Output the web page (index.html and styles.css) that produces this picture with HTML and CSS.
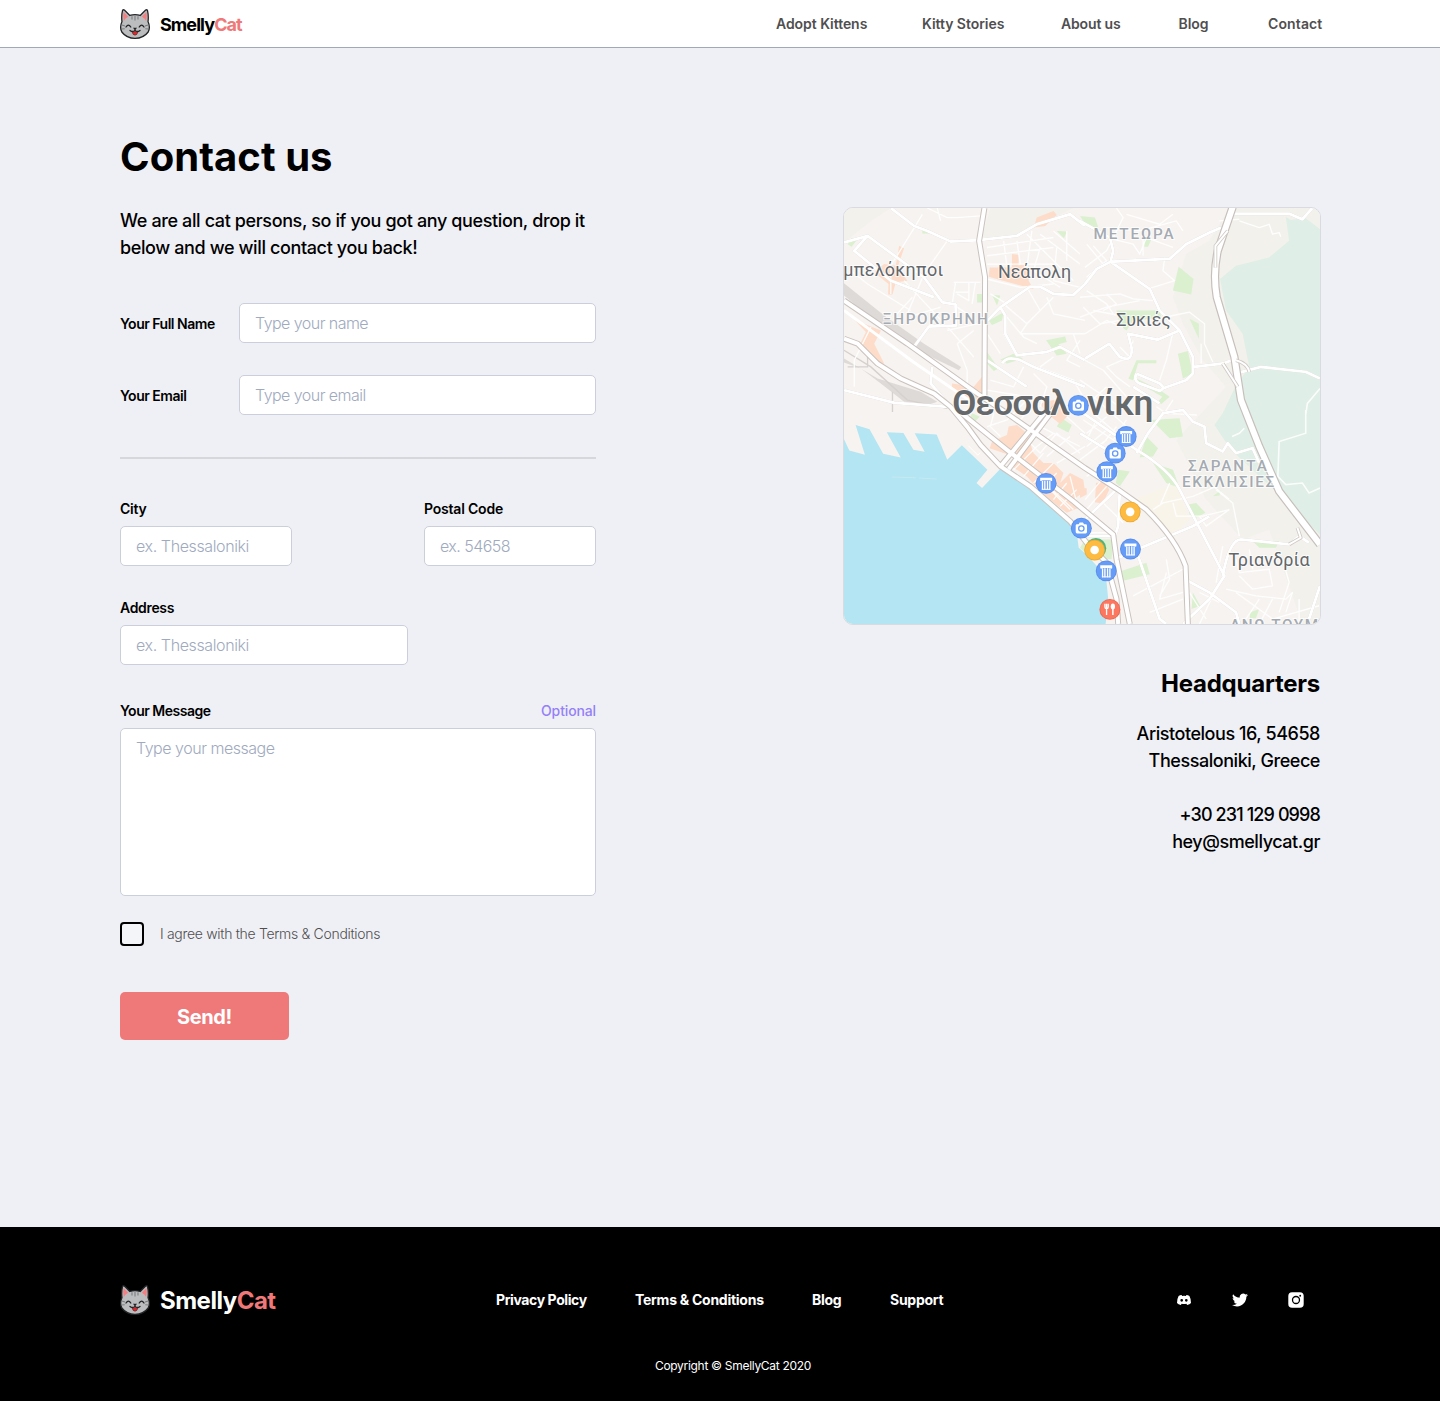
FILE: index.html
```
<!DOCTYPE html>
<html lang="en">
<head>
<meta charset="utf-8">
<title>SmellyCat – Contact us</title>
<link rel="stylesheet" href="styles.css">
</head>
<body>
<svg class="defs" aria-hidden="true">
  <symbol id="cat" viewBox="0 0 30 30">
    <path d="M2.600 1.200Q3.500 .3 4.600 1.300L9.800 6.400Q15 4.900 20.200 6.400L25.400 1.300Q26.500 .3 27.400 1.200Q28.800 7 28 12.600Q30.600 18.500 28.200 23Q23.500 29.300 15 29.300Q6.500 29.300 1.800 23Q-.6 18.500 2 12.600Q1.200 7 2.600 1.200Z" fill="#bcbdbe" stroke="#222426" stroke-width="1.300"/>
    <path d="M3.600 3L8.200 7.800Q5.200 9 3.800 12Q2.600 7 3.600 3ZM26.400 3L21.800 7.800Q24.800 9 26.200 12Q27.400 7 26.400 3Z" fill="#f37f82"/>
    <path d="M12 7.200v3.300M15 6.800v4.800M18 7.200v3.300M1.800 16l3.200 1M1.500 20l3.200-.2M28.200 16l-3.200 1M28.500 20l-3.200-.2" stroke="#7c7e80" stroke-width="1.100" fill="none"/>
    <path d="M6 18Q8.400 14.300 10.800 18M19.200 18Q21.600 14.300 24 18M10 21.400Q12.800 23.600 15 21.400Q17.200 23.600 20 21.400" stroke="#222426" stroke-width="1.300" fill="none" stroke-linecap="round"/>
    <path d="M12.200 23Q15 22.200 17.800 23Q17.200 26.200 15 26.200Q12.800 26.200 12.200 23Z" fill="#e8272c" stroke="#222426" stroke-width=".5"/>
    <path d="M13 18.800h4L15 21.400Z" fill="#222426"/>
  </symbol>
</svg>

<header class="header">
  <div class="container header-inner">
    <a class="brand"><svg class="brand-cat"><use href="#cat"/></svg><span class="brand-name">Smelly<b>Cat</b></span></a>
    <nav class="nav">
      <a>Adopt Kittens</a><a>Kitty Stories</a><a class="nav-about">About us</a><a>Blog</a><a class="nav-contact">Contact</a>
    </nav>
  </div>
</header>

<main class="container main">
  <section class="contact">
    <h1>Contact us</h1>
    <p class="lead">We are all cat persons, so if you got any question, drop it<br>below and we will contact you back!</p>
    <form>
      <div class="row"><label class="tight">Your Full Name</label><input class="field" placeholder="Type your name"></div>
      <div class="row"><label class="tight">Your Email</label><input class="field" placeholder="Type your email"></div>
      <hr>
      <div class="split">
        <div class="group"><label>City</label><input class="field place" placeholder="ex. Thessaloniki"></div>
        <div class="group"><label>Postal Code</label><input class="field" placeholder="ex. 54658"></div>
      </div>
      <div class="group address"><label class="addr">Address</label><input class="field place" placeholder="ex. Thessaloniki"></div>
      <div class="group message">
        <div class="label-row"><label class="tight">Your Message</label><span class="optional">Optional</span></div>
        <textarea class="field area" placeholder="Type your message"></textarea>
      </div>
      <label class="agree"><span class="box"></span>I agree with the Terms &amp; Conditions</label>
      <button class="send" type="button">Send!</button>
    </form>
  </section>

  <aside class="office">
    <svg class="map" viewBox="9 21 1434 1254" preserveAspectRatio="none">
      <defs>
        <g id="museum"><circle r="31.500" fill="#5a8ce8"/><circle r="29" fill="#659cf7"/><path d="M-18-17H18V-8Q14-5 12-9H-12Q-14-5-18-8Z" fill="#fff"/><path d="M-11-8V19M-4-8V19M4-8V19M11-8V19" stroke="#fff" stroke-width="4"/><path d="M-13 18H13" stroke="#fff" stroke-width="3"/></g>
        <g id="camera"><circle r="31.500" fill="#5a8ce8"/><circle r="29" fill="#659cf7"/><path d="M-13-12H-8L-5-17H5L8-12H13Q17-12 17-8V12Q17 16 13 16H-13Q-17 16-17 12V-8Q-17-12-13-12Z" fill="#fff"/><circle cy="1" r="8" fill="#fff" stroke="#659cf7" stroke-width="4"/></g>
        <g id="spot"><circle r="31.500" fill="#e9a935"/><circle r="29" fill="#fdbb42"/><circle r="13" fill="#fff"/></g>
      </defs>
      <rect x="0" y="0" width="1450" height="1300" fill="#f7f3f0"/>
      <g fill="#f2f1ec">
        <path d="M9 21H150L90 60L9 125ZM450 21H700L570 85L520 108L425 108Z"/>
        <path d="M1040 160L1110 120L1170 21H1443V1275H1390L1290 990L1210 1020L1100 900L1010 720L1160 560L1090 480L1030 370L1000 290Z"/>
      </g>
      <path d="M880 900L1010 850L1050 960L1000 1010L930 960Z" fill="#f8f4e9"/>
      <path d="M1340 48L1355 57L1400 52L1443 85V1005L1310 875L1175 750L1125 675L1150 640L1190 555L1230 500L1210 400L1160 330L1142 235L1190 195L1290 170L1350 120Z" fill="#dfeee6"/>
      <g fill="#daf0cf">
        <path d="M20 130L32 112L46 120L32 138ZM245 80L270 90V98H245ZM650 90L680 92L672 112ZM410 280H430V306H410ZM455 283L480 285L470 315ZM445 360L490 335L485 360L455 374ZM440 455L475 505L460 512L440 490ZM480 478L520 460L548 475L500 490ZM618 420L675 408L680 425L655 432L680 460L650 466Z"/>
        <path d="M720 45L765 50L775 80L740 75ZM915 115H935L925 138H914ZM1017 198L1062 235L1055 282L1000 270ZM830 330H960L965 352L880 360L860 390L840 375ZM1050 355L1078 370V415ZM1015 460L1045 452L1060 520L1030 535ZM890 480H950V489H895L880 540L866 536ZM890 535L960 570L990 590L965 612L955 605L968 590L890 545ZM1170 480L1190 478V510Z"/>
        <path d="M395 640L418 650L400 668L388 655ZM665 655L695 675L685 698L650 680ZM935 660L1020 655L1030 710L990 715ZM920 710L955 745L940 770L900 772ZM940 790L1000 810L1020 865L980 850ZM835 810L870 815L840 860L828 850ZM1045 915L1070 910L1098 940L1070 955L1050 945ZM1120 890L1145 872L1140 888ZM1240 1025H1320L1310 1045H1260ZM845 1115L920 1090L930 1125L850 1145ZM1060 1180L1082 1220L1056 1230ZM1232 1240L1260 1230L1250 1258H1232ZM735 1020H820L815 1080L750 1075L720 1045Z"/>
      </g>
      <g fill="#fddcc9">
        <path d="M175 135L190 142L170 200L200 240L165 245L155 282H142L143 250L100 215L130 190L165 195ZM580 80L590 50L640 30L650 42L615 75ZM515 160L535 162V195L545 190L570 205L565 240L580 265L480 238L445 228L448 200L515 200ZM40 358L120 390L100 430L130 490L110 488L58 430L75 395ZM335 550L400 560L425 530V590L395 605L332 568ZM600 610L640 600L690 640L660 672L620 640Z"/>
        <path d="M505 680L530 675L560 700L580 760L610 790L640 790L670 820L660 850L690 820L730 840L735 875L700 900L715 925L680 940L610 885L560 830L515 800L520 770L448 745L455 725L500 705ZM720 865L740 866V885L720 895ZM768 850L795 845L808 870L788 912L765 908Z"/>
      </g>
      <path d="M9 248L130 345L250 430L362 500L355 510L240 455L120 375L9 285ZM9 475L110 535L240 575L290 605L270 612L190 605L120 550L60 505L9 487Z" fill="#dedad8"/>
      <g fill="none" stroke="#d6d1cf" stroke-width="4"><path d="M9 450L90 500L200 600L320 625M20 500H80V470M155 575V636"/></g>
      <path d="M9 718L25 752L72 765L44 675L86 688L127 762L180 773L138 697L188 699L218 750L252 756L222 700L288 704L320 780L364 736L441 810L408 850L425 865L481 806L570 865L640 920L695 975L712 1015L716 1045L735 1062L780 1110L800 1150L806 1210L797 1275H9Z" fill="#b3e5f2"/>
      <path d="M155 832L225 834M235 835L288 838" fill="none" stroke="#d3eaf0" stroke-width="2"/>
      <path d="M384 738L412 766L420 758" fill="none" stroke="#fff" stroke-width="3"/>

      <g class="streets">
        <path d="M245 40L215 90L150 195V280M320 120L250 220L200 340M190 240L330 390L400 470M340 245H420M345 275H385M345 245L335 310L380 340M385 245V300L350 280M405 245L395 310M300 60L290 21M260 21L320 50H350L420 45M30 210L80 250L210 330M40 560V480L90 380M320 390L410 370M350 430L380 510V570M400 390L350 430M160 350L215 290M300 320L220 345"/>
        <path d="M440 140L640 110M440 165L640 140M440 190H640M490 120L500 200M530 120L540 190M575 90L560 200M600 100L720 190M640 90L720 160M600 140L580 210L660 260M440 235L540 260L640 250M650 140L640 240L720 260M560 100L700 240M680 90V180M490 310L560 370L540 400H735M560 260L600 330L560 370M640 290L600 330M500 350L550 410L590 430M450 280L500 310M620 290L640 340L735 360M490 400L530 470M720 420L680 480L720 500M700 400L720 460M550 500L520 560L450 540M580 520L620 560L600 620M590 500L700 540L735 600M440 400L480 460M440 570L560 590M600 500L640 470"/>
        <path d="M735 200L800 150L850 50L830 21M800 110L880 130L900 160L920 110L1000 140M860 40L960 70L1000 40M800 80L900 90L1010 60L1030 90M910 100V165M975 170L970 210L1005 240L925 265M760 135L800 180L740 230M740 130L790 190M720 290L840 280L880 295L940 300M720 350L800 320L900 300M740 270L800 310L820 340M735 400L800 360L850 380M760 330L840 345M730 320L780 370L840 360M800 280L830 310L790 330M1000 345L1050 335L1095 370V430L1120 485M1085 430V490M1000 395L980 480L960 540M940 360L1000 345M880 420L870 470L800 500L830 530L870 560M840 440L870 470M735 480L790 510L860 590M720 540L840 620M800 560L735 620M760 590L860 680M1200 60L1260 80L1290 70L1300 100L1320 95L1325 108M1140 60L1200 55M950 620L980 640L1072 645M1000 600L960 660"/>
        <path d="M440 680L500 660L560 600M600 590L540 660M460 640L450 680L480 710M560 720L600 760L650 700L720 760M590 740L640 700M620 770L690 710M650 790L735 740M680 650L735 700M600 680L720 740M500 800L560 740M520 810L590 740M550 830L610 760M580 850L640 790M640 900L680 850M600 870L650 820M660 920L710 870M690 830L710 910M620 860L690 930M560 800L700 930M730 660L850 740M760 640L830 700M740 700L800 650M740 740L800 690M720 780L800 720M740 830L820 770M735 900L820 800M820 1000L730 1000M790 910L850 970M740 930L800 860M860 660L820 720M770 660L740 720M830 680L790 730"/>
        <path d="M940 930L970 910L1060 890L1130 860M1000 910L1010 950L1090 950L1170 930M1130 870L1180 910L1200 1010M1110 850L1170 900M990 850L960 920M1080 950L1100 980L1170 930M1190 1080L1200 1120L1290 1110L1300 1160L1240 1170L1200 1130M1160 1170L1250 1190L1340 1200L1360 1180L1340 1240M1330 1080L1350 1150L1320 1240M1230 1050L1240 1110M1190 1180L1300 1260L1440 1220M1260 1200L1220 1260M1300 1200L1260 1275M1380 1200V1275M1080 1180L1140 1210M980 1120L960 1200L1030 1180M880 1190L1030 1110M930 1240L1030 1200M1050 1180L1100 1260M1120 1190L1080 1275M1150 1040L1130 1150M980 1080L990 1140L960 1190"/>
      </g>
      <g fill="none" stroke="#fff" stroke-width="5" opacity=".85"><path d="M1400 630V700L1320 725L1316 830L1340 855L1390 850L1410 880L1443 865M1443 565L1405 610L1400 645M1178 710L1200 700L1215 685"/></g>
      <g class="roads">
        <path d="M150 21L220 75L260 90L330 122L410 118L530 105L590 70L690 40L735 75M9 125L80 105L250 230L305 305L345 312L347 375L265 378L218 442M80 105L40 150L150 240L280 290M9 570L160 608L340 622M275 500L270 550L330 620M432 370L480 320L570 258L600 258L640 280L700 283L735 250L770 205L812 183M480 320L495 345V400L530 465L620 455L660 440L735 480M432 475L560 560M485 490Q500 465 540 480L580 500L735 560M812 183L990 174L1040 130L1110 95L1145 80M812 183L820 150L810 110L720 60M812 183L930 265L960 330L1020 390L1060 470L1060 520L1040 540L970 565M1020 390L955 418L865 400L875 440Q880 490 840 470L808 430L735 475M1060 500L1150 490L1190 475M1165 38H1350L1390 55L1420 21M1190 520L1265 500L1400 515L1443 535"/>
        <path d="M890 520L960 550Q980 565 960 572L900 550Q880 540 890 520M880 560L960 610M890 760L925 700L970 640L1030 630L1060 665L1095 680L1100 730L1150 755L1165 730L1190 760L1240 745L1260 790M730 640L890 750Q990 810 1020 870L1155 1130L1110 1200L1030 1275M720 700L850 780M905 1045L1060 980L1110 950M1150 1130Q1170 1020 1205 1020L1350 1035L1380 1010L1410 1030M840 870L835 980L825 1010H740M735 960L840 860M825 1080L905 1045M895 1070L960 1260L980 1275M1045 1145L1110 1180L1190 1240L1200 1275M1443 1160L1410 1260"/>
      </g>
      <path class="major" d="M9 300L200 430L410 580L500 640L735 805L835 870L920 930Q1010 1020 1038 1100L1045 1275M9 415L50 430L110 490L180 535L280 580L330 620L380 680L420 735L481 800L570 860L690 965L740 1030L800 1090L830 1200L835 1275M345 625L500 750L700 905L820 1005L830 1080L870 1275M480 800L620 630M505 808L650 615M432 21L416 120L434 230L432 590"/>
      <path class="major-fill" d="M9 300L200 430L410 580L500 640L735 805L835 870L920 930Q1010 1020 1038 1100L1045 1275M9 415L50 430L110 490L180 535L280 580L330 620L380 680L420 735L481 800L570 860L690 965L740 1030L800 1090L830 1200L835 1275M345 625L500 750L700 905L820 1005L830 1080L870 1275M480 800L620 630M505 808L650 615M432 21L416 120L434 230L432 590"/>
      <path d="M9 330L218 485L400 610" fill="none" stroke="#fff" stroke-width="9"/>
      <g fill="none" stroke-linejoin="round">
        <path d="M1180 18L1135 150Q1120 220 1132 290L1185 470L1205 600L1260 740L1320 875L1443 1035" stroke="#c6bfbb" stroke-width="25"/>
        <path d="M1180 18L1135 150Q1120 220 1132 290L1185 470L1205 600L1260 740L1320 875L1443 1035" stroke="#fff" stroke-width="18"/>
        <path d="M1165 90L1128 135V200M1150 490L1195 560M1190 480Q1225 490 1230 515M1375 985L1385 1015L1350 1035" stroke="#cfc9c5" stroke-width="11"/>
        <path d="M1165 90L1128 135V200M1150 490L1195 560M1190 480Q1225 490 1230 515M1375 985L1385 1015L1350 1035" stroke="#fff" stroke-width="6"/>
      </g>

      <g class="town">
        <text x="308" y="225" text-anchor="end" textLength="337">Αμπελόκηποι</text>
        <text x="473" y="231" textLength="220">Νεάπολη</text>
        <text x="829" y="376" textLength="165">Συκιές</text>
        <text x="1167" y="1099" textLength="245">Τριανδρία</text>
      </g>
      <g class="district">
        <text x="126" y="371" textLength="316">ΞΗΡΟΚΡΗΝΗ</text>
        <text x="761" y="115" textLength="241">ΜΕΤΕΩΡΑ</text>
        <text x="1045" y="813" textLength="238">ΣΑΡΑΝΤΑ</text>
        <text x="1027" y="861" textLength="278">ΕΚΚΛΗΣΙΕΣ</text>
        <text x="1172" y="1294" textLength="265">ΑΝΩ ΤΟΥΜ</text>
      </g>
      <text class="city" x="335" y="644" textLength="606">Θεσσαλονίκη</text>

      <use href="#camera" x="715" y="616"/>
      <use href="#museum" x="859" y="710"/>
      <use href="#camera" x="826" y="760"/>
      <use href="#museum" x="801" y="816"/>
      <use href="#museum" x="618" y="851"/>
      <use href="#camera" x="724" y="986"/>
      <use href="#spot" x="871" y="937"/>
      <circle cx="768" cy="1047" r="31" fill="#4fb37c"/>
      <use href="#spot" x="764" y="1052"/>
      <use href="#museum" x="872" y="1049"/>
      <use href="#museum" x="799" y="1115"/>
      <g transform="translate(810 1231)"><circle r="31.500" fill="#e86851"/><circle r="29" fill="#fb7760"/><path d="M-15-17V-7Q-15-2-10-2V17M-10-17V-4M-5-17V-7Q-5-2-10-2" stroke="#fff" stroke-width="4" fill="none"/><ellipse cx="9" cy="-9" rx="6.500" ry="9" fill="#fff"/><path d="M9-2V17" stroke="#fff" stroke-width="4.500"/></g>
    </svg>
    <h2>Headquarters</h2>
    <address>
      <span>Aristotelous 16, 54658</span><span>Thessaloniki, Greece</span><span class="phone">+30 231 129 0998</span><span>hey@smellycat.gr</span>
    </address>
  </aside>
</main>

<footer class="footer">
  <div class="container footer-inner">
    <a class="brand"><svg class="brand-cat"><use href="#cat"/></svg><span class="brand-name">Smelly<b>Cat</b></span></a>
    <nav class="footer-nav"><a class="privacy">Privacy Policy</a><a>Terms &amp; Conditions</a><a>Blog</a><a>Support</a></nav>
    <div class="social">
      <svg viewBox="0 0 16 16"><path d="M5.600 3Q3.900 3.200 2.600 4Q.9 7 1 11Q2.300 12.600 4.800 13L5.700 11.800Q8 12.400 10.300 11.800L11.200 13Q13.700 12.600 15 11Q15.100 7 13.400 4Q12.100 3.200 10.400 3L9.900 4Q8 3.700 6.100 4ZM5.700 6.900A1.350 1.450 0 1 1 5.700 9.800A1.350 1.450 0 1 1 5.700 6.900ZM10.300 6.900A1.350 1.450 0 1 1 10.300 9.800A1.350 1.450 0 1 1 10.300 6.900Z" fill="#fff" fill-rule="evenodd"/></svg>
      <svg viewBox="0 0 24 24"><path d="M24 4.600a10 10 0 0 1-2.800.8 5 5 0 0 0 2.100-2.700c-.9.600-2 1-3.100 1.200a4.900 4.900 0 0 0-8.400 4.500C7.700 8.200 4.100 6.300 1.700 3.200a4.900 4.900 0 0 0 1.500 6.500 4.900 4.900 0 0 1-2.200-.6c0 2.300 1.600 4.400 3.900 4.900-.7.200-1.500.2-2.200.1a4.900 4.900 0 0 0 4.600 3.400A9.900 9.900 0 0 1 0 19.500a14 14 0 0 0 7.500 2.200c9.100 0 14.300-7.700 14-14.600A10 10 0 0 0 24 4.600z" fill="#fff"/></svg>
      <svg viewBox="0 0 16 16"><rect x=".3" y=".3" width="15.400" height="15.400" rx="3.800" fill="#fff"/><circle cx="8" cy="8" r="3.500" fill="none" stroke="#000" stroke-width="1.300"/><circle cx="12.200" cy="3.800" r=".95" fill="#000"/></svg>
    </div>
  </div>
  <p class="copyright">Copyright © SmellyCat 2020</p>
</footer>
</body>
</html>
```
FILE: styles.css
```
* { box-sizing: border-box; }
body { margin: 0; background: #eff0f5; color: #000; font-family: "Inter", "Liberation Sans", sans-serif; }
h1, h2, p { margin: 0; }
.defs { display: none; }
.container { width: 1200px; margin: 0 auto; }

.header { height: 48px; background: #fff; border-bottom: 1px solid #a1a8b6; }
.header-inner { display: flex; justify-content: space-between; align-items: center; height: 47px; }
.brand { display: flex; align-items: center; gap: 10px; }
.brand-cat { width: 30px; height: 30px; }
.brand-name { padding-top: 2px; font-size: 18px; font-weight: 700; letter-spacing: -0.93px; }
.brand-name b { color: #ef7979; font-weight: inherit; }
.nav { display: grid; grid-template-columns: 146px 139px 117.5px 89.5px 52px; font-size: 14px; font-weight: 600; color: #4f4f4f; letter-spacing: -0.05px; }
.nav-about { letter-spacing: -0.16px; }
.nav-contact { letter-spacing: 0.12px; }

.main { display: flex; justify-content: space-between; height: 1179px; padding-top: 85px; }
.contact { width: 476px; }
h1 { font-size: 40px; line-height: 48px; font-weight: 700; letter-spacing: 0.05px; margin-bottom: 26px; }
.lead { font-size: 18px; line-height: 27px; font-weight: 500; letter-spacing: -0.38px; white-space: nowrap; margin-bottom: 42px; }
.row { display: grid; grid-template-columns: 119px 357px; align-items: center; margin-bottom: 32px; }
.row label { padding-top: 2px; }
label { font-size: 14px; line-height: 20px; font-weight: 600; letter-spacing: -0.2px; }
.tight { letter-spacing: -0.49px; }
.addr { letter-spacing: -0.33px; }
.field { width: 100%; height: 40px; padding: 0 15px; border: 1px solid #cbcfdb; border-radius: 5px; background: #fff; font: 300 16px/24px "Inter", sans-serif; letter-spacing: -0.54px; outline: 0; }
.field::placeholder { color: #a0aabe; opacity: 1; }
.place { letter-spacing: -0.39px; }
hr { height: 2px; margin: 42px 0 40px; border: 0; background: #d6d7da; }
.split { display: flex; justify-content: space-between; }
.split .group { width: 172px; }
.group { display: flex; flex-direction: column; gap: 7px; }
.address { width: 288px; margin-top: 32px; }
.message { margin-top: 36px; }
.label-row { display: flex; justify-content: space-between; }
.optional { color: #9480f8; font-size: 14px; line-height: 20px; font-weight: 500; letter-spacing: -0.13px; }
.area { display: block; height: 168px; padding: 7px 15px; resize: none; letter-spacing: -0.48px; }
.agree { display: flex; align-items: center; gap: 16px; margin-top: 26px; color: #4f4f4f; font-weight: 300; letter-spacing: -0.31px; }
.box { width: 24px; height: 24px; border: 2px solid #000; border-radius: 4px; background: #f4f5f9; }
.send { display: block; width: 169px; height: 48px; margin-top: 46px; padding: 2px 0 0; border: 0; border-radius: 5px; background: #ef7979; color: #fff; font: 700 20px/46px "Inter", sans-serif; letter-spacing: -0.4px; }

.office { display: flex; flex-direction: column; align-items: flex-end; width: 478px; margin-top: 74px; margin-right: -1px; }
.map { display: block; width: 478px; height: 418px; border: 1px solid #d9dbe0; border-radius: 10px; overflow: hidden; }
.streets { fill: none; stroke: #fff; stroke-width: 4; stroke-linejoin: round; opacity: .9; }
.roads { fill: none; stroke: #fff; stroke-width: 9; stroke-linejoin: round; filter: drop-shadow(0 0 1px #cfcac8); }
.major { fill: none; stroke: #c9c2be; stroke-width: 18; stroke-linejoin: round; }
.major-fill { fill: none; stroke: #fff; stroke-width: 12; stroke-linejoin: round; }
.town, .district, .city { font-family: "Roboto", sans-serif; paint-order: stroke; stroke: rgba(255, 255, 255, .75); stroke-width: 6px; }
.town { font-size: 54px; fill: #63676b; }
.district { font-size: 46px; fill: #a4aab1; font-weight: 500; }
.city { font-size: 106px; font-weight: 600; fill: #65696c; }
h2 { margin: 43px 1px 20px 0; font-size: 24px; line-height: 32px; font-weight: 700; letter-spacing: -0.24px; }
address { display: flex; flex-direction: column; align-items: flex-end; margin-right: 1px; font-size: 18px; line-height: 27px; font-weight: 500; font-style: normal; letter-spacing: -0.45px; }
.phone { margin-top: 27px; letter-spacing: -0.88px; }

.footer { height: 174px; padding-top: 55px; background: #000; color: #fff; }
.footer-inner { display: grid; grid-template-columns: 376px 1fr 144px; align-items: center; height: 36px; }
.footer .brand-name { padding-top: 0; font-size: 24px; letter-spacing: -0.5px; }
.footer-nav { display: grid; grid-template-columns: 139px 177px 78px 54px; padding-bottom: 2px; font-size: 14px; font-weight: 700; letter-spacing: -0.26px; white-space: nowrap; }
.privacy { letter-spacing: -0.4px; }
.social { display: flex; gap: 40px; }
.social svg { width: 16px; height: 16px; }
.copyright { margin-top: 39px; padding-left: 26px; font-size: 12px; line-height: 18px; text-align: center; letter-spacing: -0.3px; }
```
